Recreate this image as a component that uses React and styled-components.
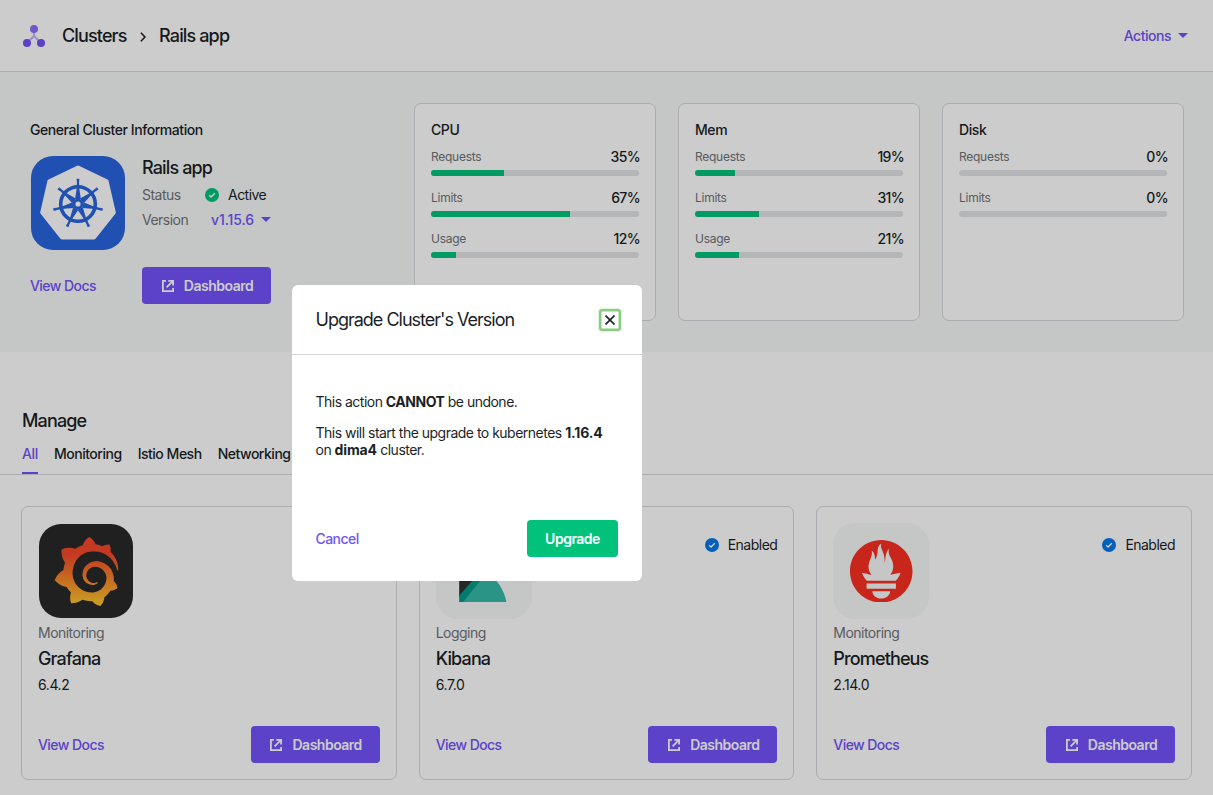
import React from "react";
import styled, { createGlobalStyle, css } from "styled-components";
import { SiGrafana, SiPrometheus } from "react-icons/si";

const c = {
  text: "#1b1f27",
  muted: "#717378",
  purple: "#7253fa",
  green: "#00c27b",
  blue: "#0779ea",
  line: "#d6d8db",
  band: "#f6f9f8",
  track: "#e3e4e6",
};

const GlobalStyle = createGlobalStyle`
  * { box-sizing: border-box; }
  body {
    margin: 0;
    background: #fff;
    color: ${c.text};
    font: 400 14px/20px Inter, "Liberation Sans", sans-serif;
    letter-spacing: -0.52px;
    overflow: hidden;
  }
  p { margin: 0; }
  button { font: inherit; letter-spacing: inherit; border: 0; padding: 0; background: none; }
`;

const Page = styled.div`
  position: relative;
  width: 100%;
  height: 795px;
  overflow: hidden;
`;

const Header = styled.header`
  display: flex;
  align-items: center;
  justify-content: space-between;
  height: 72px;
  padding: 0 25px 0 23px;
  border-bottom: 1px solid ${c.line};
`;

const Crumbs = styled.nav`
  display: flex;
  align-items: center;
  svg { display: block; }
`;

const Heading = styled.h2`
  margin: 0;
  font-size: 18px;
  line-height: 24px;
  font-weight: 500;
  letter-spacing: -0.86px;
`;

const CrumbLogo = styled.svg`
  margin-right: 17px;
`;

const CrumbArrow = styled.svg`
  margin: 3px 13.5px 0 13px;
`;

const Link = styled.button`
  display: inline-flex;
  align-items: center;
  gap: 7px;
  color: ${c.purple};
  font-weight: 500;
  white-space: nowrap;
  letter-spacing: ${(p) => p.$track || "-0.56px"};
`;

const Button = styled.button`
  display: inline-flex;
  align-items: center;
  justify-content: center;
  gap: 10px;
  width: ${(p) => (p.$small ? 91 : 129)}px;
  height: 37px;
  padding-left: ${(p) => (p.$small ? 0 : 2)}px;
  border-radius: 4px;
  background: ${(p) => (p.$small ? c.green : c.purple)};
  color: #fff;
  font-weight: 600;
  letter-spacing: -0.5px;
`;

const Overview = styled.section`
  display: flex;
  height: 280px;
  padding: 31px 29px 0 30px;
  background: ${c.band};
`;

const General = styled.div`
  width: 384px;
  padding-top: 17px;
`;

const Label = styled.div`
  font-weight: 500;
  letter-spacing: -0.43px;
`;

const ClusterGrid = styled.div`
  display: grid;
  grid-template-columns: 96px 129px;
  column-gap: 16px;
  row-gap: 16px;
  align-items: center;
  margin-top: 15px;
`;

const AppBox = styled.div`
  display: flex;
  align-items: center;
  justify-content: center;
  width: ${(p) => (p.$inset ? 94 : 96)}px;
  height: ${(p) => (p.$inset ? 94 : 96)}px;
  margin: ${(p) => (p.$inset ? 1 : 0)}px;
  border-radius: 22px;
  background: ${(p) => p.$bg};
  svg { display: block; }
`;

const Facts = styled.div`
  align-self: start;
  padding-top: 1px;
`;

const Fact = styled.div`
  display: flex;
  align-items: center;
  height: 25px;
  margin-top: ${(p) => p.$top || 0}px;
`;

const FactName = styled.span`
  width: ${(p) => p.$w}px;
  color: ${c.muted};
  white-space: nowrap;
`;

const State = styled.span`
  display: inline-flex;
  align-items: center;
  gap: 9px;
  svg { display: block; }
`;

const Metrics = styled.div`
  display: flex;
  gap: 22px;
`;

const Panel = styled.article`
  border: 1px solid ${c.line};
  border-radius: 7px;
  background: #fff;
  padding: 16px;
`;

const MetricCard = styled(Panel)`
  width: 242px;
  height: 218px;
`;

const Metric = styled.div`
  margin-top: ${(p) => (p.$first ? 7 : 12)}px;
`;

const MetricHead = styled.div`
  display: flex;
  justify-content: space-between;
  height: 20px;
  margin-right: -1px;
  font-weight: 500;
  letter-spacing: -0.65px;
`;

const MetricName = styled.span`
  font-size: 12px;
  font-weight: 400;
  letter-spacing: -0.27px;
  color: ${c.muted};
`;

const Track = styled.div`
  height: 6px;
  margin-top: 3px;
  border-radius: 3px;
  background: ${c.track};
  overflow: hidden;
`;

const Fill = styled.div`
  height: 100%;
  background: ${c.green};
`;

const Manage = styled.section`
  padding-top: 57px;
`;

const Tabs = styled.div`
  display: flex;
  gap: 16px;
  height: 42px;
  padding-left: 22px;
  border-bottom: 1px solid ${c.line};
`;

const Tab = styled.div`
  height: 41px;
  padding-top: 11px;
  font-weight: 500;
  letter-spacing: -0.48px;
  white-space: nowrap;
  ${(p) =>
    p.$active &&
    css`
      color: ${c.purple};
      letter-spacing: -0.35px;
      border-bottom: 2px solid ${c.purple};
    `}
`;

const ManageTitle = styled(Heading)`
  padding-left: 22px;
`;

const Apps = styled.div`
  display: grid;
  grid-template-columns: repeat(3, 1fr);
  gap: 22px;
  padding: 31px 21px 0;
`;

const AppCard = styled(Panel)`
  height: 274px;
`;

const AppTop = styled.div`
  display: flex;
  justify-content: space-between;
`;

const Enabled = styled(State)`
  height: 20px;
  margin-top: 12px;
`;

const Kind = styled.div`
  margin: 4px 0;
  color: ${c.muted};
`;

const Version = styled.div`
  margin-top: 4px;
  letter-spacing: -0.4px;
`;

const Footer = styled.div`
  display: flex;
  align-items: center;
  justify-content: space-between;
  margin-top: ${(p) => p.$top}px;
`;

const Overlay = styled.div`
  position: absolute;
  inset: 0;
  background: rgba(0, 0, 0, 0.2);
`;

const Modal = styled.div`
  position: absolute;
  left: 292px;
  top: 285px;
  width: 350px;
  height: 296px;
  border-radius: 6px;
  background: #fff;
`;

const ModalHead = styled.div`
  display: flex;
  align-items: center;
  justify-content: space-between;
  height: 70px;
  padding: 0 21px 0 23.5px;
  border-bottom: 1px solid ${c.line};
`;

const ModalTitle = styled(Heading)`
  font-weight: 400;
  letter-spacing: -1px;
`;

const Close = styled.button`
  display: flex;
  align-items: center;
  justify-content: center;
  width: 22px;
  height: 22px;
  border-radius: 3px;
  box-shadow: inset 0 0 0 2.5px #8ccb82, 0 0 2px 0 #8ccb82;
  svg { display: block; }
`;

const ModalBody = styled.div`
  height: 226px;
  padding: 38px 24px 24px 23.5px;
  display: flex;
  flex-direction: column;
  justify-content: space-between;
`;

const Message = styled.p`
  line-height: 17px;
  letter-spacing: -0.51px;
  margin-bottom: 14px;
  b { font-weight: 700; letter-spacing: ${(p) => p.$bold || "-0.5px"}; }
`;

const Caret = () => (
  <svg width="10" height="5" viewBox="0 0 10 5">
    <path d="M0 0h10L5 5z" fill={c.purple} />
  </svg>
);

const Check = ({ color }) => (
  <svg width="14" height="14" viewBox="0 0 14 14">
    <circle cx="7" cy="7" r="7" fill={color} />
    <path d="M4.2 7.3l1.9 1.7 3.7-3.7" fill="none" stroke="#fff" strokeWidth="1.5" />
  </svg>
);

const External = () => (
  <svg width="12" height="12" viewBox="0 0 12 12" fill="none" stroke="#fff" strokeWidth="1.8">
    <path d="M4 .9H.9v10.2h10.2V8" />
    <path d="M6.3 .9h4.8V5.6M10.8 1.2L4.6 7.4" />
  </svg>
);

const Kubernetes = () => (
  <svg width="94" height="94" viewBox="-47 -47 94 94">
    <path
      d="M0-35.5L28.6-21.7 35.8 9.5 16 34.6H-16L-35.8 9.5-28.6-21.7z"
      fill="#fff"
      stroke="#fff"
      strokeWidth="4"
      strokeLinejoin="round"
    />
    <g transform="translate(0 1)" fill="#2a65e0">
      <circle r="17.3" fill="none" stroke="#2a65e0" strokeWidth="3.6" />
      {[0, 1, 2, 3, 4, 5, 6].map((i) => (
        <path
          key={i}
          transform={`rotate(${(i * 360) / 7})`}
          d="M-1.4-25.2h2.8l-.3 3.5.3 7L2.9-5H-2.9L-1.4-14.7l.3-7z"
        />
      ))}
      <circle r="5.4" />
      <circle r="2.6" fill="#fff" />
    </g>
  </svg>
);

const Grafana = () => (
  <>
    <svg width="0" height="0">
      <defs>
        <linearGradient id="flame" x1="0" y1="0" x2="0" y2="1">
          <stop offset="0.25" stopColor="#f4482b" />
          <stop offset="0.92" stopColor="#fcbd2c" />
        </linearGradient>
      </defs>
    </svg>
    <SiGrafana size={69} fill="url(#flame)" />
  </>
);

const Kibana = () => (
  <svg width="63" height="62" viewBox="0.3 0 32.5 32">
    <path d="M4 0v12l14 4L28.9 0z" fill="#e8478b" />
    <path d="M4 12v17.5L17 15.1A24.7 24.7 0 004 12z" fill="#303030" />
    <path d="M4 28.8V32h6l8.5-15.3-2.6-1.6z" fill="#009a87" />
    <path d="M18.5 16.7L6 32h22.4c-1.3-6.3-4.9-11.7-9.9-15.3z" fill="#35bba9" />
  </svg>
);

const metrics = [
  { name: "CPU", rows: [["Requests", 35], ["Limits", 67], ["Usage", 12]] },
  { name: "Mem", rows: [["Requests", 19], ["Limits", 31], ["Usage", 21]] },
  { name: "Disk", rows: [["Requests", 0], ["Limits", 0]] },
];

const apps = [
  { name: "Grafana", kind: "Monitoring", version: "6.4.2", bg: "#282828", inset: true, logo: <Grafana /> },
  { name: "Kibana", kind: "Logging", version: "6.7.0", bg: c.band, logo: <Kibana /> },
  { name: "Prometheus", kind: "Monitoring", version: "2.14.0", bg: c.band, logo: <SiPrometheus size={62.5} color="#fb3021" /> },
];

const DashboardButton = () => (
  <Button>
    <External />
    Dashboard
  </Button>
);

export default function App() {
  return (
    <Page>
      <GlobalStyle />
      <Header>
        <Crumbs>
          <CrumbLogo width="22" height="22" viewBox="0 0 22 22">
            <path d="M11 4v7M11 11L4 18M11 11L18 18" stroke="#c0b4fb" strokeWidth="1.9" />
            <circle cx="11" cy="4" r="4" fill="#8b70fb" />
            <circle cx="4" cy="18" r="4" fill={c.purple} />
            <circle cx="18" cy="18" r="4" fill={c.purple} />
          </CrumbLogo>
          <Heading>Clusters</Heading>
          <CrumbArrow width="6" height="10" viewBox="0 0 6 10">
            <path d="M.9.8L5 5 .9 9.2" fill="none" stroke={c.text} strokeWidth="1.6" />
          </CrumbArrow>
          <Heading>Rails app</Heading>
        </Crumbs>
        <Link $track="-0.48px">
          Actions
          <Caret />
        </Link>
      </Header>

      <Overview>
        <General>
          <Label>General Cluster Information</Label>
          <ClusterGrid>
            <AppBox $inset $bg="#2a65e0">
              <Kubernetes />
            </AppBox>
            <Facts>
              <Heading>Rails app</Heading>
              <Fact $top={2}>
                <FactName $w={63}>Status</FactName>
                <State>
                  <Check color={c.green} />
                  Active
                </State>
              </Fact>
              <Fact>
                <FactName $w={69}>Version</FactName>
                <Link $track="-0.1px">
                  v1.15.6
                  <Caret />
                </Link>
              </Fact>
            </Facts>
            <Link>View Docs</Link>
            <DashboardButton />
          </ClusterGrid>
        </General>
        <Metrics>
          {metrics.map((m) => (
            <MetricCard key={m.name}>
              <Label>{m.name}</Label>
              {m.rows.map(([name, value], i) => (
                <Metric key={name} $first={i === 0}>
                  <MetricHead>
                    <MetricName>{name}</MetricName>
                    {value}%
                  </MetricHead>
                  <Track>
                    <Fill style={{ width: `${value}%` }} />
                  </Track>
                </Metric>
              ))}
            </MetricCard>
          ))}
        </Metrics>
      </Overview>

      <Manage>
        <ManageTitle>Manage</ManageTitle>
        <Tabs>
          <Tab $active>All</Tab>
          <Tab>Monitoring</Tab>
          <Tab>Istio Mesh</Tab>
          <Tab>Networking</Tab>
        </Tabs>
        <Apps>
          {apps.map((a) => (
            <AppCard key={a.name}>
              <AppTop>
                <AppBox $bg={a.bg} $inset={a.inset}>
                  {a.logo}
                </AppBox>
                <Enabled>
                  {!a.inset && (
                    <>
                      <Check color={c.blue} />
                      Enabled
                    </>
                  )}
                </Enabled>
              </AppTop>
              <Kind>{a.kind}</Kind>
              <Heading>{a.name}</Heading>
              <Version>{a.version}</Version>
              <Footer $top={31}>
                <Link>View Docs</Link>
                <DashboardButton />
              </Footer>
            </AppCard>
          ))}
        </Apps>
      </Manage>

      <Overlay />
      <Modal>
        <ModalHead>
          <ModalTitle>Upgrade Cluster's Version</ModalTitle>
          <Close aria-label="Close">
            <svg width="10" height="10" viewBox="0 0 10 10">
              <path d="M.5.5l9 9M9.5.5l-9 9" stroke={c.text} strokeWidth="1.6" />
            </svg>
          </Close>
        </ModalHead>
        <ModalBody>
          <div>
            <Message>
              This action <b>CANNOT</b> be undone.
            </Message>
            <Message $bold="-0.15px">
              This will start the upgrade to kubernetes <b>1.16.4</b> on <b>dima4</b> cluster.
            </Message>
          </div>
          <Footer $top={0}>
            <Link>Cancel</Link>
            <Button $small>Upgrade</Button>
          </Footer>
        </ModalBody>
      </Modal>
    </Page>
  );
}
